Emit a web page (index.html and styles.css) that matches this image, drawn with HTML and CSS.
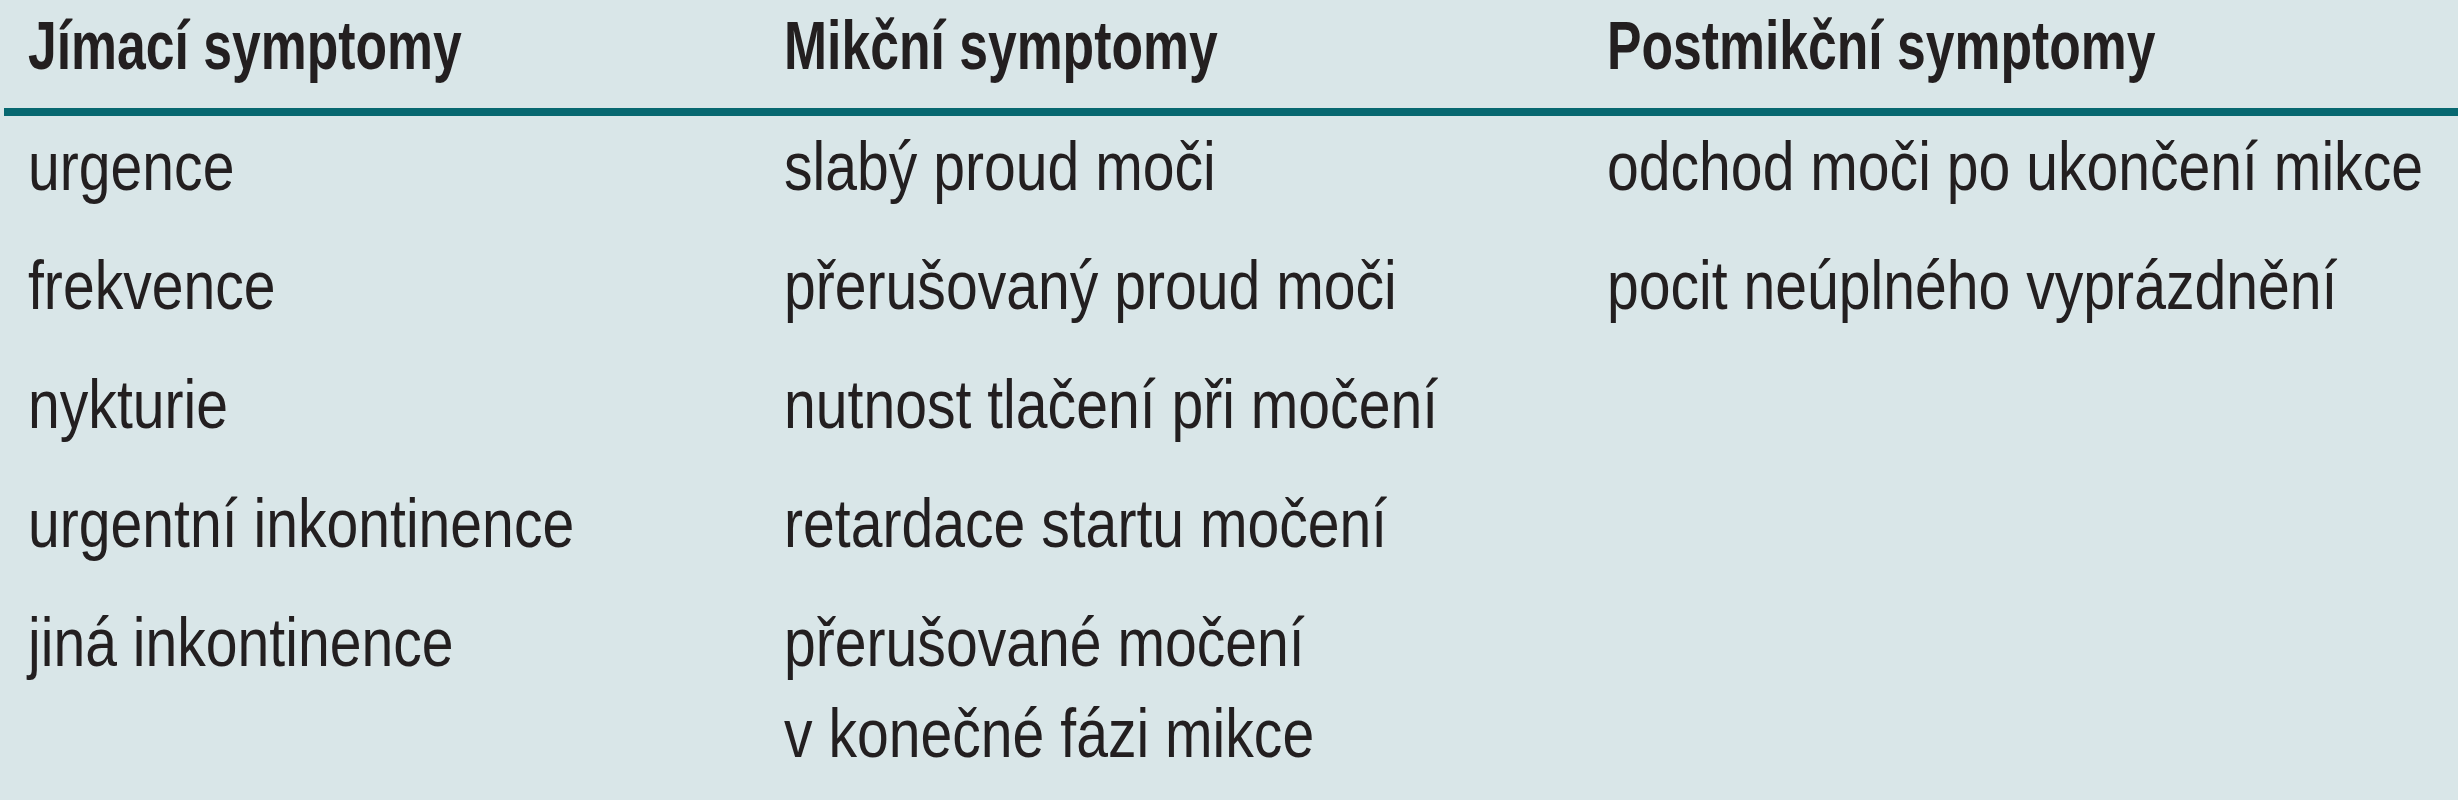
FILE: index.html
```html
<!DOCTYPE html>
<html lang="cs">
<head>
<meta charset="utf-8">
<title>Symptomy</title>
<link rel="stylesheet" href="styles.css">
</head>
<body>
<div class="table">
  <div class="head">
    <div class="th"><span class="txt">Jímací symptomy</span></div>
    <div class="th"><span class="txt">Mikční symptomy</span></div>
    <div class="th"><span class="txt">Postmikční symptomy</span></div>
  </div>
  <div class="body">
    <div class="td"><span class="txt">urgence</span></div>
    <div class="td"><span class="txt">slabý proud moči</span></div>
    <div class="td"><span class="txt">odchod moči po ukončení mikce</span></div>
    <div class="td"><span class="txt">frekvence</span></div>
    <div class="td"><span class="txt">přerušovaný proud moči</span></div>
    <div class="td"><span class="txt">pocit neúplného vyprázdnění</span></div>
    <div class="td"><span class="txt">nykturie</span></div>
    <div class="td"><span class="txt">nutnost tlačení při močení</span></div>
    <div class="td"></div>
    <div class="td"><span class="txt">urgentní inkontinence</span></div>
    <div class="td"><span class="txt">retardace startu močení</span></div>
    <div class="td"></div>
    <div class="td"><span class="txt">jiná inkontinence</span></div>
    <div class="td"><span class="txt">přerušované močení<br>v konečné fázi mikce</span></div>
    <div class="td"></div>
  </div>
</div>
</body>
</html>
```
FILE: styles.css
```css
html, body {
  margin: 0;
  padding: 0;
  background: #d9e6e8;
}
body {
  width: 2458px;
  height: 800px;
  overflow: hidden;
  font-family: "Liberation Sans", Arial, sans-serif;
  color: #231f20;
  font-size: 68px;
  line-height: 91px;
}
.table {
  padding-left: 4px;
}
.head,
.body {
  display: grid;
  grid-template-columns: 756px 823px 1fr;
  padding-left: 24px;
}
.head {
  border-bottom: 8px solid #076870;
  padding-bottom: 17px;
}
.txt {
  display: inline-block;
  white-space: nowrap;
  transform-origin: left center;
  transform: scaleX(0.84);
}
.th .txt {
  font-weight: bold;
  transform: scaleX(0.76);
}
.body {
  padding-top: 5px;
  row-gap: 28px;
}
.td {
  min-height: 91px;
}
```
